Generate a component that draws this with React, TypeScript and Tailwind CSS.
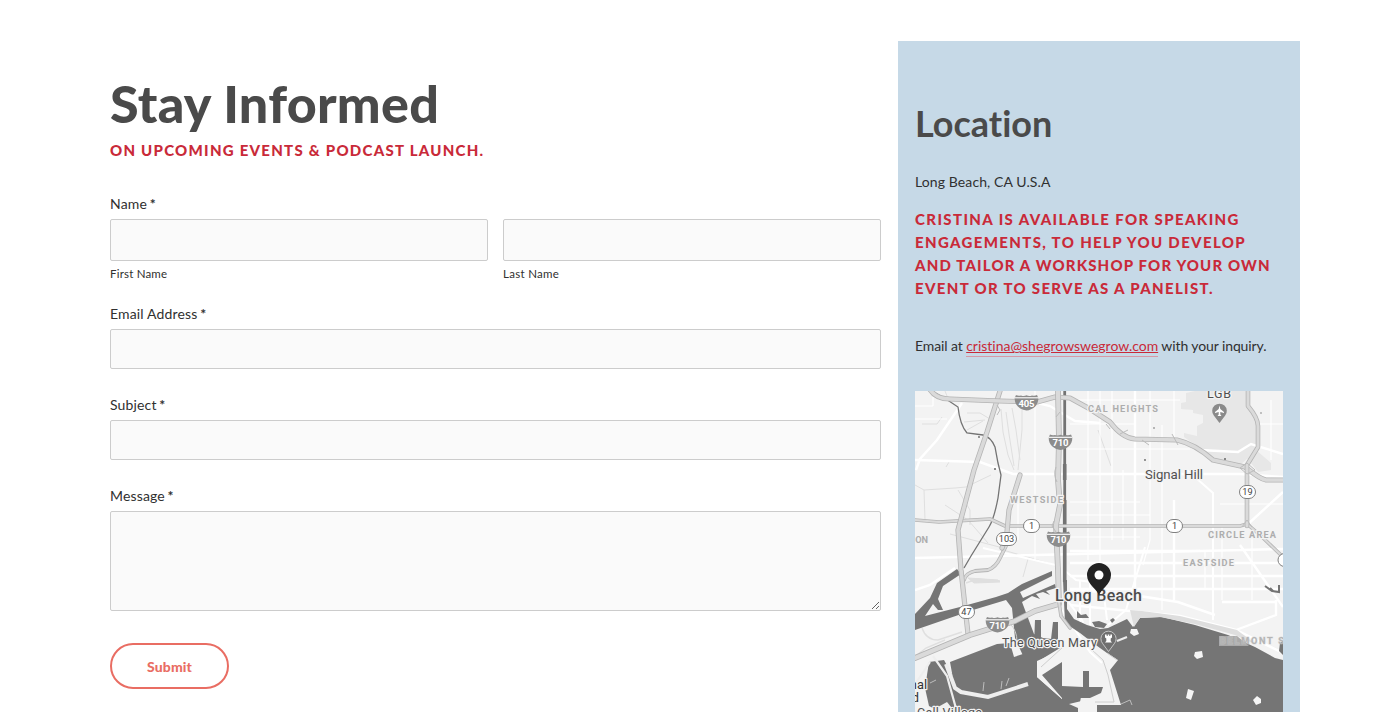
import type { ReactNode } from "react";

const halo = {
  stroke: "#f3f3f3",
  strokeWidth: 2.4,
  strokeLinejoin: "round" as const,
  paintOrder: "stroke",
};

function Shield({ x, y, label }: { x: number; y: number; label: string }) {
  return (
    <g transform={`translate(${x} ${y})`}>
      <path
        d="M-10.5-8Q-8-6.6-5.5-7.6Q-2.5-6.4 0-7.8Q2.5-6.4 5.5-7.6Q8-6.6 10.5-8L11.8-5C12 2.5 6.5 6.5 0 7.6C-6.5 6.5-12 2.5-11.8-5Z"
        fill="#8c8c8c"
      />
      <path d="M-11.8-5.2H11.8" stroke="#fff" strokeWidth="1.1" />
      <text y="3.8" textAnchor="middle" fontSize="9.5" fontWeight="700" fill="#fff" textLength="16">
        {label}
      </text>
    </g>
  );
}

function Route({ x, y, label, w = 16 }: { x: number; y: number; label: string; w?: number }) {
  return (
    <g transform={`translate(${x} ${y})`}>
      <rect x={-w / 2} y="-6.5" width={w} height="13" rx="6.5" fill="#fff" stroke="#808080" />
      <text y="3.3" textAnchor="middle" fontSize="9.2" fill="#444">
        {label}
      </text>
    </g>
  );
}

function Area({ x, y, w, children, end }: { x: number; y: number; w?: number; children: ReactNode; end?: boolean }) {
  return (
    <text
      x={x}
      y={y}
      fontSize="9.2"
      fontWeight="700"
      fill="#adadad"
      textLength={w}
      textAnchor={end ? "end" : "start"}
      {...halo}
    >
      {children}
    </text>
  );
}

function Highway({ d, w = 3.6 }: { d: string; w?: number }) {
  return (
    <>
      <path d={d} stroke="#b4b4b4" strokeWidth={w + 1.6} />
      <path d={d} stroke="#dadada" strokeWidth={w} />
    </>
  );
}

function LocationMap() {
  return (
    <svg
      viewBox="915 391 368 321"
      className="block h-[321px] w-[368px] font-[Roboto,sans-serif]"
      role="img"
      aria-label="Long Beach"
    >
      <rect x="915" y="391" width="368" height="321" fill="#f3f3f3" />
      <path d="M1181 409V403L1186 402V393L1195 391H1247V404L1257 420V445L1248 458L1240 465L1220 461L1208 454L1184 437V433L1197 436V426L1203 423V415L1193 413V410ZM1243 453L1256 450L1271 463V470L1258 472Z" fill="#e7e7e7" />

      {/* fine streets */}
      <g fill="none" stroke="#dfdfdf" strokeWidth="1">
        <path d="M915 485L924 490L955 488L966 487L991 475M924 490L925 520M967 413H980L990 419M964 422L985 420M967 430L983 421M1001 409L1003 432L1008 455L1014 470M1006 412L1009 434L1014 466M1012 408L1016 430L1020 460M1022 400V430L1018 470M1098 430L1111 466M945 505L968 520L988 543M950 534L1003 548M922 424H937L942 417M946 467L949 462" />
        <path d="M958 490L970 510V525M945 391L947 396M1023 577L1028 559M1003 550L1055 565" />
        <path d="M922 628Q926 640 938 640L962 632M917 655L926 648L945 640M966 583L977 579L1000 581" strokeWidth="1.4" />
        <path d="M968 578L998 580L1000 582L974 583Z" fill="#dfdfdf" />
      </g>
      <g fill="none" stroke="#fff">
        <path strokeWidth="1.2" d="M933 391V406M915 406H933M915 419H947M1018 475V540M1035 391V560M1088 391V560M1100 391V600M1112 391V540M1123 470V540M1135 391V600M1150 391V540L1143 565M1162 425V610M1174 391V437M1174 526V600M1222 526V600M1252 530V600M1271 400V460M1205 552V590" />
        <path strokeWidth="1.2" d="M1070 424H1135M1068 449H1190M1070 502H1140M1070 515H1150M1220 504H1283M1070 563H1180M1070 400H1180M1260 424H1283M1070 537H1140" />
        <path strokeWidth="2.4" d="M915 460L980 462L1013 474H1240L1283 477M962 403L937 440L920 459L916 470M1025 400L1050 406L1075 421L1100 423M1200 450L1238 452L1251 444L1283 454M1247 525L1283 492M915 558L1283 549M955 568L930 585L915 590M1070 551H1200M1070 576L1283 576M1070 590L1120 593L1178 602L1215 615M1070 605L1130 611L1180 616L1236 630L1283 653M1236 630L1276 615V600M1240 545L1283 607M1174 500V600M1135 391V600M1070 563H1283M1070 589H1283M1222 602H1276" />
        <path strokeWidth="2" d="M983 548L1060 566M1187 470L1213 493V620M1145 547L1126 610L1108 625M1064 570L1076 580L1100 583M1067 600L1082 620L1094 652M1062 610L1090 652L1102 663M1080 580V625M1090 575V625M1100 562L1107 620" />
      </g>

      {/* waterways */}
      <g fill="#757575">
        <path d="M915 614L930 598L937 583L957 569L961 574L943 586L938 599L943 610L938 610L933 604L925 616L960 607L996 597L1008 593L1022 584L1052 571V576L1020 592L1023 598L1055 584L1056 588L1046 591L1050 595L1043 592L1036 594L1040 599L1032 596L1022 602L1034 634L1043 638L1060 640L1025 660L1015 638L1012 608L1006 600L973 610L915 630Z" />
        <path d="M950 662L997 644L1010 643L1014 657L1026 653V643L1060 641V648L1037 662V677L1062 699V686L1083 687L1078 712H958L956 695Z" />
        <path d="M929 662L944 660L957 684L960 712H941L929 706L925 688Z" />
        <path d="M1035 620H1041V644H1034ZM1053 622H1058V644L1050 648Z" />
        <path d="M1063 580H1067V609L1074 619L1087 625L1100 629L1108 628L1127 619L1133 627L1140 618L1162 617L1195 625L1228 635L1255 647L1275 658L1283 660V712H1097V705L1121 705L1110 670L1118 660L1107 653L1093 643L1080 633L1065 623Z" />
        <path d="M1077 611L1081 615L1086 614L1089 618L1077 618ZM1092 622L1099 621L1107 624L1104 628L1095 627ZM1110 620L1113 618L1115 620L1112 623ZM1280 643L1283 641V655L1279 651Z" />
      </g>
      <g fill="none" stroke="#737373">
        <path d="M1064.7 391V582" strokeWidth="2.8" />
        <path d="M1064.7 464V480M1064.7 500V582" strokeWidth="3.6" />
        <path d="M932 391L949 401L958 407Q960 425 967 433L983 435Q991 437 995 447L998 463L1001 475L998 498Q994 519 989 527L971 556L964 568" strokeWidth="1.3" />
        <path d="M1265 586L1272 591L1279 592L1279 585M1273 591L1270 588" strokeWidth="2" />
      </g>
      <path d="M1130 610L1142 611L1180 616L1237 630L1257 645L1235 635L1195 624L1160 617L1140 618L1134 627Z" fill="#dedede" />

      {/* breakwaters, piers and islands */}
      <path d="M1062 650L1037 661V677L1062 699V693L1042 676L1062 662ZM1069 704L1090 699L1103 692V684L1121 705H1097V712H1078V708Z" fill="#f3f3f3" />
      <path d="M1042 675L1062 662V687H1083V671H1089V687H1103L1101 693L1090 698H1065L1062 698Z" fill="#757575" />
      <g fill="none" stroke="#eee" strokeWidth="4">
        <path d="M946 664L955 688L961 692L988 697L1028 684" />
        <path strokeWidth="2.2" d="M933 656L947 676L957 712M1127 637L1117 641M930 662L924 671L915 684" />
        <path strokeWidth="1" stroke="#bdbdbd" d="M984 682L983 691M1002 681L1001 689M1009 678L1006 686M1121 704L1130 700L1132 705M930 683L936 680" />
      </g>
      <path d="M938 707L947 702L955 712H939Z" fill="#f0f0f0" />
      <g fill="#f5f5f5">
        <path d="M1131 629L1137 629L1139 634L1134 636L1130 633ZM1195 652L1202 651L1203 657L1197 659L1194 656ZM1188 689L1194 691L1191 700L1186 698ZM1257 696L1261 699L1261 703L1256 705L1253 700Z" />
      </g>
      <path d="M1091 649L1103 660L1108 675L1114 702H1095M1063 647L1041 667M1107 653L1117 660M1010 624Q1017 630 1017 642" stroke="#cecece" strokeWidth="1" fill="none" />

      <g fill="none" strokeLinejoin="round" strokeLinecap="round">
        <Highway w={2.2} d="M964 580Q966 573 975 571L988 570Q996 567 1000 558L1006 546" />
        <Highway w={2} d="M915 520L939 522L990 519L1005 526H1060L1240 526L1247 524L1260 535L1283 557" />
        <Highway w={3.6} d="M1000 391L987 432L974 470L958 530L961 570L968 634" />
        <Highway w={3.6} d="M1020 475L1009 510L1007 532L1002 548" />
        <Highway w={3.6} d="M929 388Q935 399 950 399L1000 401L1037 402L1055 397L1070 398L1090 409L1110 422Q1122 438 1135 439L1177 440Q1195 444 1213 460L1245 467Q1260 479 1266 480L1283 480" />
        <Highway w={4.2} d="M1058 391L1059 440L1058 480L1060 505L1056 525L1058 570L1059 604L1035 611L1015 621L970 635L915 658" />
        <Highway w={3} d="M1248 388L1248 406Q1258 418 1258 426V447L1247 465L1247 526" />
        <Highway w={2} d="M1059 602L1061 616L1070 628" />
      </g>
      <g fill="none" stroke="#bcbcbc" strokeWidth="1">
        <path d="M997 405L1000 410L997 415M1056 417L1060 412M1056 467Q1053 475 1057 482M1106 424L1110 429M1120 434L1128 430M1142 440L1149 445M1172 434L1178 445M1240 468L1247 463L1255 470L1247 474ZM1054 521L1052 526L1056 532M1242 527L1247 520L1252 527" />
      </g>
      <g fill="#666">
        <circle cx="979" cy="437" r=".9" /><circle cx="995" cy="469" r="1" /><circle cx="1154" cy="428" r=".8" />
        <circle cx="1145" cy="460" r=".9" /><circle cx="1225" cy="459" r="1" /><circle cx="1261" cy="413" r=".7" />
      </g>

      <Shield x={1026.5} y={403} label="405" />
      <Shield x={1060.5} y={442.5} label="710" />
      <Shield x={1058.5} y={539.5} label="710" />
      <Shield x={997.5} y={625} label="710" />
      <Route x={1031.5} y={526} label="1" />
      <Route x={1006.5} y={539} label="103" w={20} />
      <Route x={1174.5} y={526} label="1" />
      <Route x={1247.5} y={492} label="19" />
      <Route x={966.5} y={612} label="47" />
      <Route x={1286} y={560} label="" />

      <Area x={1088} y={411.5} w={70}>CAL HEIGHTS</Area>
      <Area x={1010} y={503} w={53}>WESTSIDE</Area>
      <Area x={1208} y={538} w={68}>CIRCLE AREA</Area>
      <Area x={1183} y={566} w={51}>EASTSIDE</Area>
      <Area x={928} y={543} end>ON</Area>
      <path d="M1219 636H1237L1249 646H1219Z" fill="#a9a9a9" />
      <text x="1220" y="644" fontSize="9.2" fontWeight="700" fill="#b4b4b4" stroke="#cdcdcd" strokeOpacity=".55" strokeWidth="1" paintOrder="stroke" textLength="72">BELMONT SH</text>

      <g fill="#505050" {...halo}>
        <text x="1207" y="398" fontSize="12.5" textLength="24">LGB</text>
        <text x="1145" y="479" fontSize="13.3" textLength="58">Signal Hill</text>
        <text x="1055" y="601" fontSize="16" fontWeight="500" fill="#4c4c4c" textLength="87">Long Beach</text>
        <text x="1002" y="647" fontSize="12.5" textLength="95">The Queen Mary</text>
        <text x="927" y="688.5" fontSize="12.8" textAnchor="end" fill="#333">nal</text>
        <text x="919" y="701.5" fontSize="12.8" textAnchor="end" fill="#333">d</text>
        <text x="917" y="717" fontSize="12.5" textLength="65">Cell Village</text>
      </g>

      <path d="M1219.5 423L1213.8 415.5A7.3 7.3 0 1 1 1225.2 415.5Z" fill="#8a8a8a" />
      <path d="M1219.5 405.5L1220.3 409L1224 412V413L1220.3 412V414.5L1221.5 416H1217.5L1218.7 414.5V412L1215 413V412L1218.7 409Z" fill="#fff" />
      <path d="M1108.5 651.5L1102.8 643.8A7.6 7.6 0 1 1 1114.2 643.8Z" fill="#6f6f6f" stroke="#ccc" strokeWidth=".9" />
      <path d="M1105 634.5H1106.7V636H1107.7V634.5H1109.3V636H1110.3V634.5H1112V637.5L1110.7 638.5V641L1112 642.5H1105L1106.3 641V638.5L1105 637.5Z" fill="#fff" />
      <path d="M1099 596C1098 589 1087 585 1087 575A12 12 0 0 1 1111 575C1111 585 1100 589 1099 596Z" fill="#222" />
      <circle cx="1099" cy="575" r="4.5" fill="#fff" />
    </svg>
  );
}

const fieldStyle = "block w-full rounded-[2px] border border-[#ccc] bg-[#fafafa] outline-none";
const labelStyle = "block h-[24px] text-[14px] leading-[24px] tracking-[0.15px]";

function Label({ htmlFor, children }: { htmlFor: string; children: ReactNode }) {
  return (
    <label htmlFor={htmlFor} className={labelStyle}>
      {children} <b className="-ml-px">*</b>
    </label>
  );
}

export default function App() {
  return (
    <main className="flex h-[712px] w-full overflow-hidden bg-white pl-[110px] font-[Lato,sans-serif] text-[#303030] [font-variant-ligatures:none]">
      <section className="w-[771px] shrink-0 pt-[73px]">
        <h1 className="h-[62px] whitespace-nowrap text-[52px] font-black leading-[60px] tracking-[0.3px] text-[#4a4a4a]">Stay Informed</h1>
        <h3 className="h-[30px] whitespace-nowrap text-[15px] font-black leading-[30px] tracking-[1.26px] text-[#c92a39]">ON UPCOMING EVENTS &amp; PODCAST LAUNCH.</h3>
        <form className="pt-[27px]" onSubmit={(e) => e.preventDefault()}>
          <Label htmlFor="first">Name</Label>
          <div className="mt-[3px] grid grid-cols-2 gap-[15px]">
            <div>
              <input id="first" className={`${fieldStyle} h-[42px]`} />
              <label htmlFor="first" className="mt-[3px] block text-[11.5px] leading-5 tracking-[0.2px]">First Name</label>
            </div>
            <div>
              <input id="last" className={`${fieldStyle} h-[42px]`} />
              <label htmlFor="last" className="mt-[3px] block text-[11.5px] leading-5 tracking-[0.3px]">Last Name</label>
            </div>
          </div>
          <div className="mt-[18px] flex flex-col gap-[3px]">
            <Label htmlFor="email">Email Address</Label>
            <input id="email" className={`${fieldStyle} h-[40px]`} />
          </div>
          <div className="mt-6 flex flex-col gap-[3px]">
            <Label htmlFor="subject">Subject</Label>
            <input id="subject" className={`${fieldStyle} h-[40px]`} />
          </div>
          <div className="mt-6 flex flex-col gap-[3px]">
            <Label htmlFor="message">Message</Label>
            <textarea id="message" className={`${fieldStyle} h-[100px] resize-y`} />
          </div>
          <button className="mt-8 h-[46px] w-[119px] rounded-full border-2 border-[#e96d63] text-[14px] font-black tracking-[0.1px] text-[#e96d63]">Submit</button>
        </form>
      </section>
      <aside className="ml-[17px] mt-[41px] h-[671px] w-[402px] shrink-0 bg-[#c6d9e7] px-[17px] pt-[57px]">
        <h2 className="h-[51px] text-[36px] font-bold leading-[50px] text-[#4a4a4a]">Location</h2>
        <p className="mt-[21px] h-6 text-[14px] leading-6 tracking-[0.1px]">Long Beach, CA U.S.A</p>
        <h3 className="mt-[14px] h-[92px] whitespace-nowrap text-[15px] font-black leading-[23px] text-[#c92a39]">
          <span className="block tracking-[1.38px]">CRISTINA IS AVAILABLE FOR SPEAKING</span>
          <span className="block tracking-[1.35px]">ENGAGEMENTS, TO HELP YOU DEVELOP</span>
          <span className="block tracking-[1.15px]">AND TAILOR A WORKSHOP FOR YOUR OWN</span>
          <span className="block tracking-[1.32px]">EVENT OR TO SERVE AS A PANELIST.</span>
        </h3>
        <p className="mt-[34px] h-6 whitespace-nowrap text-[14px] leading-6 tracking-[-0.1px]">
          Email at <a href="mailto:cristina@shegrowswegrow.com" className="border-b border-[#d799a6] pb-[2px] tracking-[-0.02px] text-[#c92a39] underline">cristina@shegrowswegrow.com</a> with your inquiry.
        </p>
        <div className="mt-[33px]"><LocationMap /></div>
      </aside>
    </main>
  );
}
